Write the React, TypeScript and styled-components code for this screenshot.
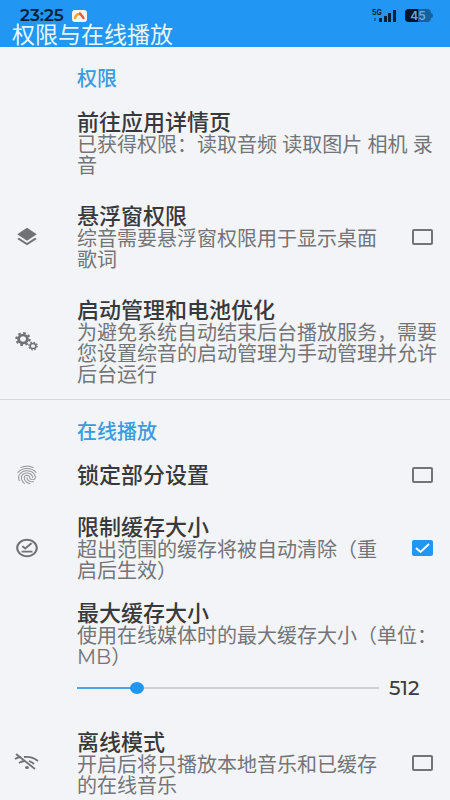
import React, { useState } from 'react';
import styled, { createGlobalStyle } from 'styled-components';
import { MdLayers, MdFingerprint, MdOutlineOfflinePin } from 'react-icons/md';

const Global = createGlobalStyle`
  * { box-sizing: border-box; }
  html { scrollbar-width: none; }
  body { margin: 0; background: #f2f4f7; }
  body, button, input { font-family: Montserrat, "Noto Sans CJK SC", sans-serif; }
`;

const Page = styled.div`
  min-height: 100vh;
  background: #f2f4f7;
  color: #303134;
`;

const Header = styled.header`
  padding: 8px 0 0;
  background: #2196f3;
`;

const StatusBar = styled.div`
  display: flex;
  align-items: center;
  height: 15px;
  padding: 0 17px 0 20px;
  gap: 8px;
`;

const Clock = styled.span`
  font: 600 17px/15px Montserrat, Inter, sans-serif;
  color: #0b2036;
`;

const Spacer = styled.span`
  flex: 1;
`;

const PageTitle = styled.h1`
  margin: 0;
  padding-left: 12px;
  font-size: 23px;
  line-height: 24px;
  font-weight: 400;
  color: #e8f6fc;
`;

const Section = styled.section`
  & + & { border-top: 1px solid #d4d6d9; }
`;

const SectionTitle = styled.h2`
  margin: 0;
  padding: 20px 10px 5px 77px;
  font-size: 20px;
  line-height: 24px;
  font-weight: 500;
  color: #3a9be0;
`;

const rowLayout = `
  display: flex;
  align-items: center;
  width: 100%;
  padding: 0 10px 0 0;
  text-align: left;
`;

const ActionRow = styled.button`
  ${rowLayout}
  border: 0;
  background: none;
  color: inherit;
`;

const CheckRow = styled.label`
  ${rowLayout}
`;

const SliderRow = styled.div`
  ${rowLayout}
`;

const IconSlot = styled.span<{ $faint?: boolean }>`
  display: flex;
  flex: none;
  width: 77px;
  padding-left: 14px;
  color: ${p => (p.$faint ? '#939598' : '#707275')};
  svg { width: 26px; height: 22px; }
`;

const TextBlock = styled.span<{ $tight?: boolean }>`
  display: block;
  flex: 1;
  min-width: 0;
  padding: ${p => (p.$tight ? '7px 0 8px' : '15px 0 13px')};
`;

const RowTitle = styled.span`
  display: block;
  font-size: 22px;
  line-height: 24px;
  font-weight: 500;
  color: #38393c;
`;

const Summary = styled.span`
  display: block;
  font-size: 20px;
  line-height: 21px;
  font-weight: 400;
  color: #737578;
`;

const CheckSlot = styled.span`
  position: relative;
  display: flex;
  flex: none;
  margin: 0 7px 0 32px;
  svg { position: absolute; inset: 0; pointer-events: none; }
`;

const CheckInput = styled.input`
  appearance: none;
  margin: 0;
  width: 21px;
  height: 16px;
  border: 2px solid #717376;
  border-radius: 2px;
  &:checked { background: #2196f3; border-color: #2196f3; }
`;

const SliderLine = styled.span`
  display: flex;
  align-items: center;
  height: 40px;
`;

const Range = styled.input`
  appearance: none;
  flex: 1;
  min-width: 0;
  height: 12px;
  margin: 0;
  background: linear-gradient(#4ba5e8, #4ba5e8) left center / var(--fill) 2px no-repeat,
    linear-gradient(#cfd1d4, #cfd1d4) center / 100% 2px no-repeat;
  &::-webkit-slider-thumb {
    appearance: none;
    width: 14px;
    height: 12px;
    border-radius: 50%;
    background: #2196f3;
  }
`;

const SliderValue = styled.output`
  width: 61px;
  padding-left: 10px;
  font: 500 20px/24px Montserrat, Inter, sans-serif;
  color: #3c3d40;
`;

const GearsIcon = () => (
  <svg viewBox="0 0 26 22" fill="none" stroke="currentColor">
    <g transform="translate(9 8) scale(1.1 1)">
      <circle r="4" strokeWidth="2.6" />
      <circle r="6" strokeWidth="2" strokeDasharray="2.4 2.31" />
    </g>
    <g transform="translate(19 15) scale(1.1 1)">
      <circle r="2.6" strokeWidth="1.5" />
      <circle r="3.8" strokeWidth="1.2" strokeDasharray="1.5 1.48" />
    </g>
  </svg>
);

const WifiOffIcon = () => (
  <svg viewBox="0 0 26 22" fill="none" stroke="currentColor" strokeWidth="1.8">
    <path d="M2 2 21 17" />
    <path d="M10 5Q18 4 24 9M1 7Q4 5 7 5M5 11Q8 9 11 9M15 9Q18 10 20 12" />
    <ellipse cx="13" cy="15.5" rx="2" ry="1.6" fill="currentColor" stroke="none" />
  </svg>
);

const WeatherBadge = () => (
  <svg width="15" height="12" viewBox="0 0 15 12">
    <rect width="15" height="12" rx="3" fill="#f2f6f6" />
    <path d="M3 8Q4 4 8 4" stroke="#f5a623" strokeWidth="2.4" fill="none" strokeLinecap="round" />
    <path d="M8 3.5 11.5 8" stroke="#e85b35" strokeWidth="2.4" strokeLinecap="round" />
  </svg>
);

const Signal = () => (
  <svg width="25" height="14" viewBox="0 0 25 14" fill="#0b2036">
    <text x="0" y="6" fontSize="7" fontWeight="700" fontFamily="Inter, sans-serif">5G</text>
    <rect x="2" y="9" width="2" height="3" fill="#1a659f" />
    <rect x="7" y="9" width="3" height="4" />
    <rect x="12" y="7" width="3" height="6" />
    <rect x="16" y="4" width="3" height="9" />
    <rect x="21" y="1" width="3" height="12" />
  </svg>
);

const Battery = () => (
  <svg width="28" height="13" viewBox="0 0 28 13">
    <rect width="26" height="13" rx="4" fill="#15629f" />
    <path d="M4 0H13V13H4Q0 13 0 9V4Q0 0 4 0Z" fill="#071421" />
    <path d="M26 4Q28 4 28 6.5Q28 9 26 9Z" fill="#15629f" />
    <text x="13" y="11" textAnchor="middle" fontSize="12" fontWeight="600" fontFamily="Inter, sans-serif" fill="#61aee6">45</text>
  </svg>
);

const CheckMark = () => (
  <svg width="21" height="16" viewBox="0 0 21 16" fill="none" stroke="#fff" strokeWidth="2">
    <path d="M4 8 8.5 12 17 4" />
  </svg>
);

type CheckProps = { icon: React.ReactNode; faint?: boolean; title: string; summary?: string; initial?: boolean };

function CheckSetting({ icon, faint, title, summary, initial = false }: CheckProps) {
  const [on, setOn] = useState(initial);
  return (
    <CheckRow>
      <IconSlot $faint={faint}>{icon}</IconSlot>
      <TextBlock>
        <RowTitle>{title}</RowTitle>
        {summary && <Summary>{summary}</Summary>}
      </TextBlock>
      <CheckSlot>
        <CheckInput type="checkbox" checked={on} onChange={e => setOn(e.target.checked)} />
        {on && <CheckMark />}
      </CheckSlot>
    </CheckRow>
  );
}

function ActionSetting({ icon, title, summary }: { icon?: React.ReactNode; title: string; summary: string }) {
  return (
    <ActionRow type="button">
      <IconSlot>{icon}</IconSlot>
      <TextBlock>
        <RowTitle>{title}</RowTitle>
        <Summary>{summary}</Summary>
      </TextBlock>
    </ActionRow>
  );
}

function CacheSizeSetting() {
  const [size, setSize] = useState(512);
  const max = 2800;
  return (
    <SliderRow>
      <IconSlot />
      <TextBlock $tight>
        <RowTitle as="label" htmlFor="cache-size">最大缓存大小</RowTitle>
        <Summary>使用在线媒体时的最大缓存大小（单位：MB）</Summary>
        <SliderLine>
          <Range
            id="cache-size"
            type="range"
            min={0}
            max={max}
            value={size}
            onChange={e => setSize(Number(e.target.value))}
            style={{ '--fill': `${(size / max) * 100}%` } as React.CSSProperties}
          />
          <SliderValue htmlFor="cache-size">{size}</SliderValue>
        </SliderLine>
      </TextBlock>
    </SliderRow>
  );
}

export default function App() {
  return (
    <Page>
      <Global />
      <Header>
        <StatusBar>
          <Clock>23:25</Clock>
          <WeatherBadge />
          <Spacer />
          <Signal />
          <Battery />
        </StatusBar>
        <PageTitle>权限与在线播放</PageTitle>
      </Header>
      <main>
        <Section>
          <SectionTitle>权限</SectionTitle>
          <ActionSetting title="前往应用详情页" summary="已获得权限：读取音频 读取图片 相机 录音" />
          <CheckSetting
            icon={<MdLayers preserveAspectRatio="none" />}
            title="悬浮窗权限"
            summary="综音需要悬浮窗权限用于显示桌面歌词"
          />
          <ActionSetting
            icon={<GearsIcon />}
            title="启动管理和电池优化"
            summary="为避免系统自动结束后台播放服务，需要您设置综音的启动管理为手动管理并允许后台运行"
          />
        </Section>
        <Section>
          <SectionTitle>在线播放</SectionTitle>
          <CheckSetting faint icon={<MdFingerprint preserveAspectRatio="none" />} title="锁定部分设置" />
          <CheckSetting
            icon={<MdOutlineOfflinePin preserveAspectRatio="none" />}
            title="限制缓存大小"
            summary="超出范围的缓存将被自动清除（重启后生效）"
            initial
          />
          <CacheSizeSetting />
          <CheckSetting icon={<WifiOffIcon />} title="离线模式" summary="开启后将只播放本地音乐和已缓存的在线音乐" />
        </Section>
      </main>
    </Page>
  );
}
